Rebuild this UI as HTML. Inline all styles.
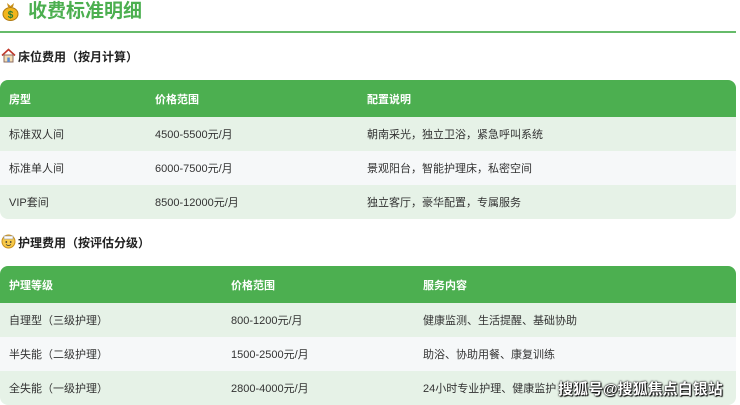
<!DOCTYPE html>
<html><head><meta charset="utf-8"><style>
body{margin:0;width:740px;height:404px;overflow:hidden;background:#fff;font-family:"Liberation Sans","Noto Sans CJK SC",sans-serif;position:relative}
.t{position:absolute;left:28px;top:-2px;font-size:19px;font-weight:bold;color:#4caf50;line-height:28px}
.ic{position:absolute;left:2px;top:1px;width:17px;height:20px}
.line{position:absolute;left:0;top:31px;width:736px;height:2px;background:#66bb6a}
.h{position:absolute;left:18px;font-size:12px;font-weight:bold;color:#222;line-height:18px}
table{position:absolute;left:0;width:736px;border-collapse:separate;border-spacing:0;font-size:11px;color:#333;border-radius:8px;overflow:hidden}
th{background:#4caf50;color:#fff;text-align:left;font-weight:bold;height:37px;padding:0 0 0 9px}
td{height:34px;padding:0 0 0 9px}
tr.a td{background:#e6f2e7}
tr.b td{background:#f6f8f9}
.wm{position:absolute;left:558px;top:378px;font-size:15px;font-weight:bold;color:#fff;text-shadow:0 0 2px #000,0 0 1px #000,1px 1px 1px #000}
</style></head><body>
<svg class="ic" viewBox="0 0 17 20"><path d="M5 2 L8.5 5 L12 2 L11 6 L6 6Z" fill="#c8901a"/><ellipse cx="8.5" cy="13" rx="7.5" ry="6.5" fill="#f2b51c" stroke="#b07a10"/><text x="8.5" y="17" font-size="10" text-anchor="middle" fill="#2e7d32" font-weight="bold">$</text></svg>
<div class="t">收费标准明细</div>
<div class="line"></div>
<svg style="position:absolute;left:1px;top:48px" width="15" height="15" viewBox="0 0 15 15"><path d="M1 7.5 L7.5 1.5 L14 7.5" fill="none" stroke="#c0392b" stroke-width="1.6"/><rect x="3" y="7" width="9" height="7" fill="#f5deb3" stroke="#8d6e63"/><rect x="6.3" y="9.5" width="2.5" height="4.5" fill="#5b8bd0"/></svg>
<div class="h" style="top:48px">床位费用（按月计算）</div>
<table style="top:80px">
<tr><th style="width:137px">房型</th><th style="width:203px">价格范围</th><th>配置说明</th></tr>
<tr class="a"><td>标准双人间</td><td>4500-5500元/月</td><td>朝南采光，独立卫浴，紧急呼叫系统</td></tr>
<tr class="b"><td>标准单人间</td><td>6000-7500元/月</td><td>景观阳台，智能护理床，私密空间</td></tr>
<tr class="a"><td>VIP套间</td><td>8500-12000元/月</td><td>独立客厅，豪华配置，专属服务</td></tr>
</table>
<svg style="position:absolute;left:1px;top:234px" width="15" height="15" viewBox="0 0 15 15"><circle cx="7.5" cy="7.5" r="6.5" fill="#f7c948" stroke="#c98f1a"/><rect x="3" y="2" width="9" height="3" fill="#fff" stroke="#999" stroke-width=".6"/><circle cx="5.3" cy="8" r=".9" fill="#333"/><circle cx="9.7" cy="8" r=".9" fill="#333"/><path d="M5 10.5 Q7.5 12.5 10 10.5" stroke="#333" fill="none" stroke-width=".8"/></svg>
<div class="h" style="top:234px">护理费用（按评估分级）</div>
<table style="top:266px">
<tr><th style="width:213px">护理等级</th><th style="width:183px">价格范围</th><th>服务内容</th></tr>
<tr class="a"><td>自理型（三级护理）</td><td>800-1200元/月</td><td>健康监测、生活提醒、基础协助</td></tr>
<tr class="b"><td>半失能（二级护理）</td><td>1500-2500元/月</td><td>助浴、协助用餐、康复训练</td></tr>
<tr class="a"><td>全失能（一级护理）</td><td>2800-4000元/月</td><td>24小时专业护理、健康监护</td></tr>
</table>
<div class="wm">搜狐号@搜狐焦点白银站</div>
</body></html>
